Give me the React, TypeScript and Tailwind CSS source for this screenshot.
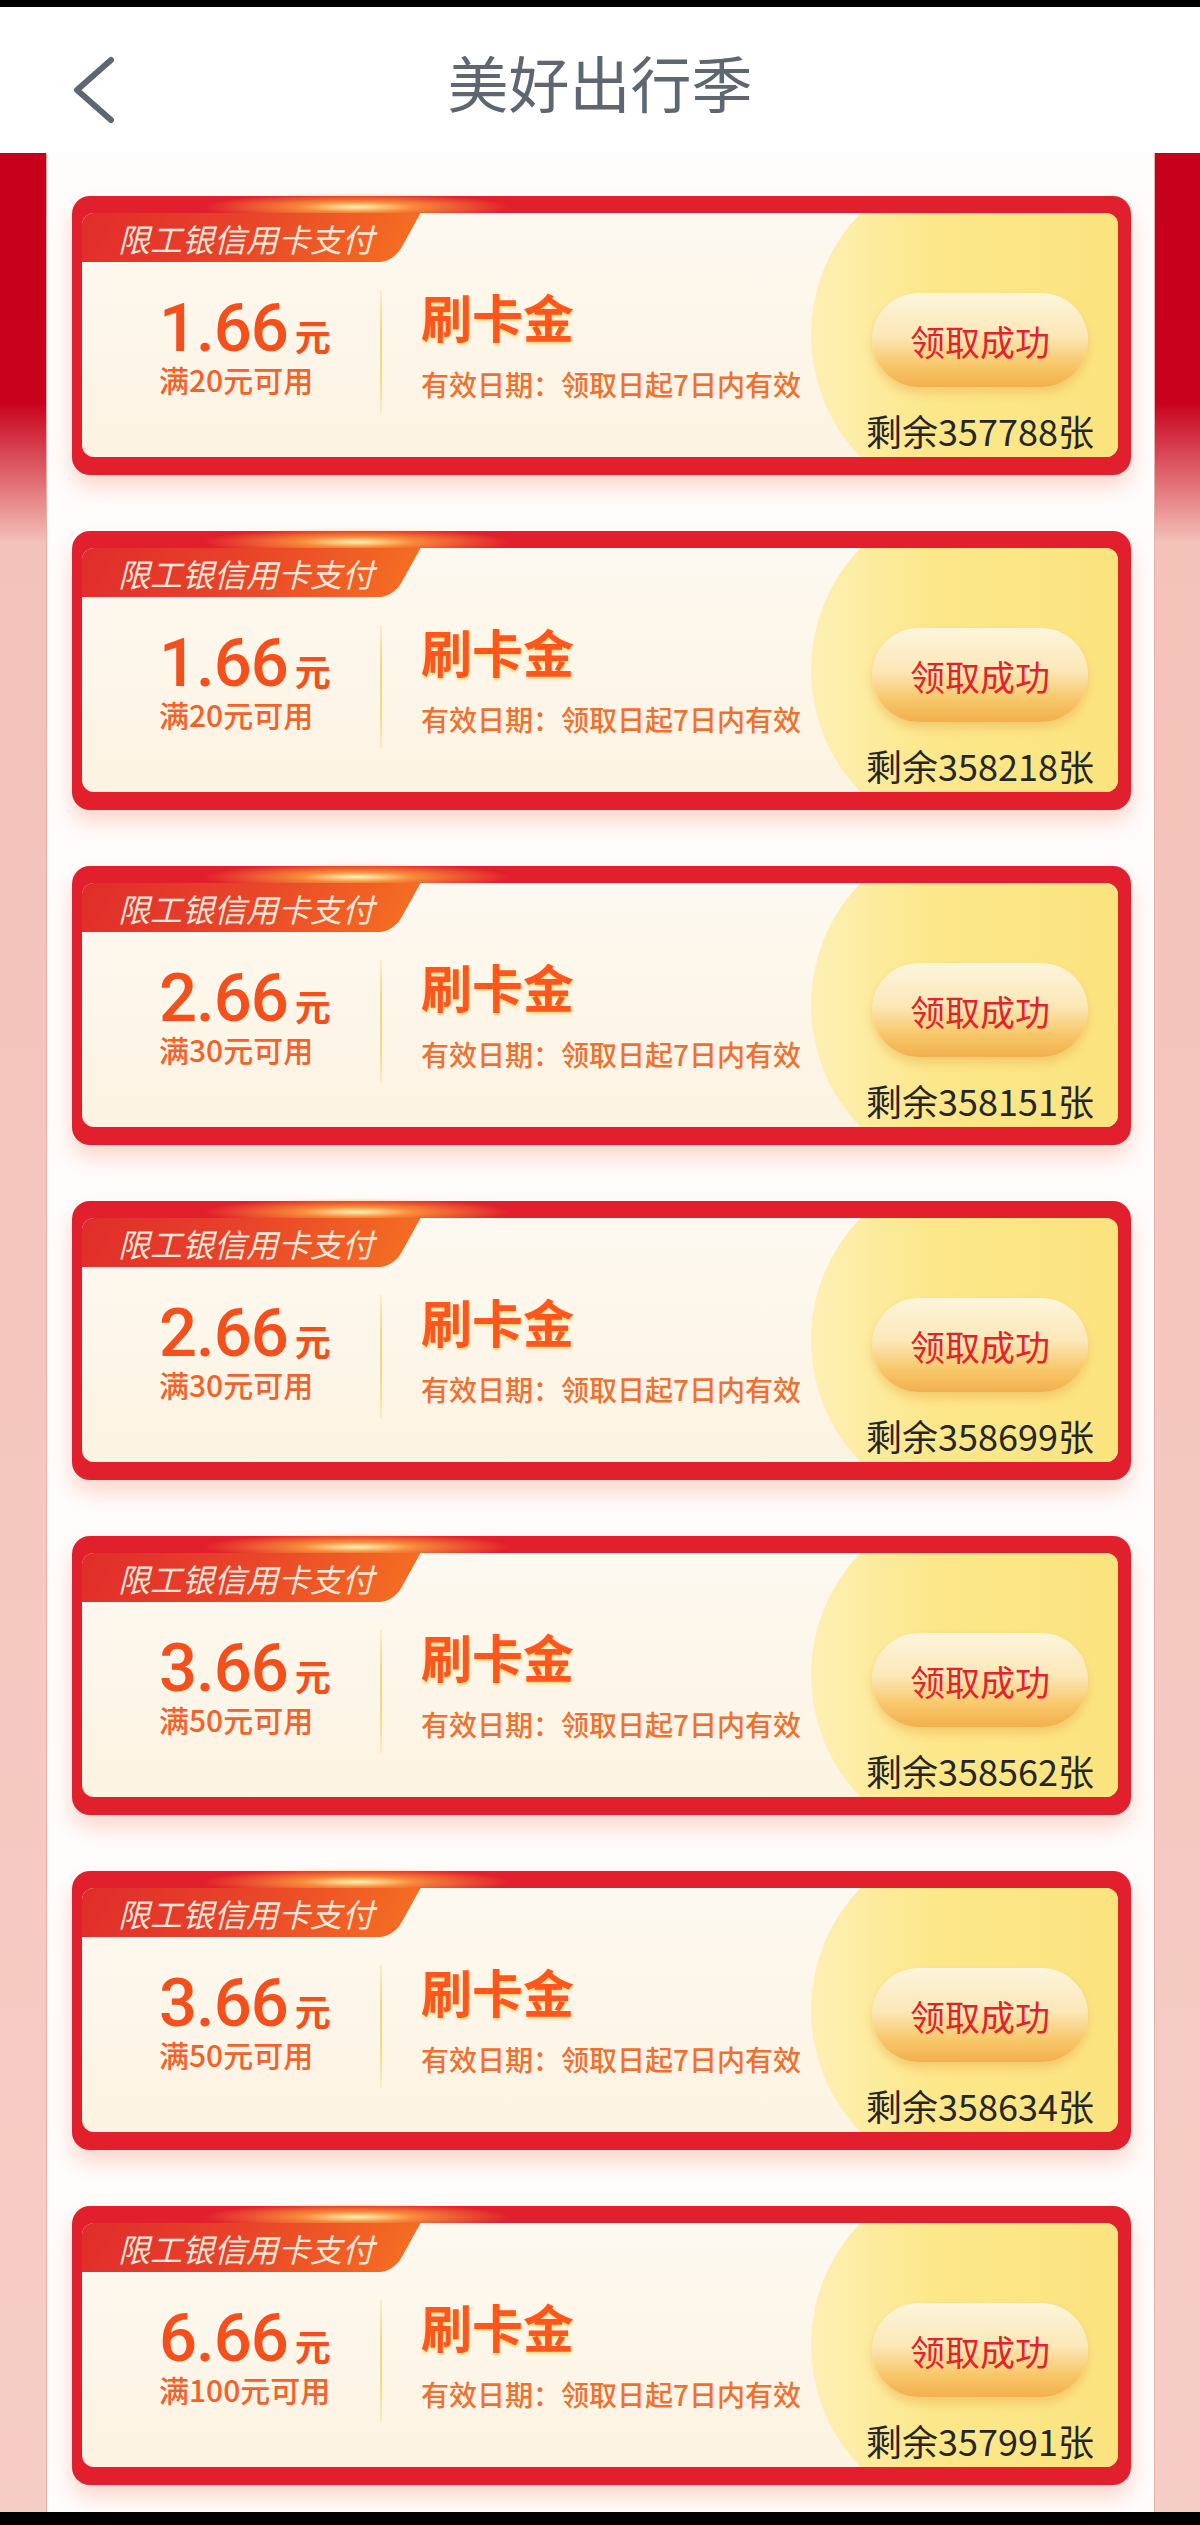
const cjk = "font-['Noto_Sans_CJK_SC','Noto_Sans',sans-serif]";

type Coupon = { amount: string; min: number; left: number };

const coupons: Coupon[] = [
  { amount: "1.66", min: 20, left: 357788 },
  { amount: "1.66", min: 20, left: 358218 },
  { amount: "2.66", min: 30, left: 358151 },
  { amount: "2.66", min: 30, left: 358699 },
  { amount: "3.66", min: 50, left: 358562 },
  { amount: "3.66", min: 50, left: 358634 },
  { amount: "6.66", min: 100, left: 357991 },
];

function CouponCard({ coupon }: { coupon: Coupon }) {
  return (
    <div className="relative h-[279px] shrink-0 rounded-[18px] bg-[#e21f2c] pt-[17px] pl-[10px] pr-[13px] pb-[18px] shadow-[0_12px_22px_rgba(236,112,80,0.28)]">
      {/* 上边的光 */}
      <div className="pointer-events-none absolute left-[130px] top-[-3px] h-[28px] w-[310px] rounded-full bg-[radial-gradient(ellipse_at_center,rgba(255,244,180,1)_0%,rgba(252,166,60,0.8)_26%,rgba(235,60,40,0)_70%)]" />

      <div className="relative h-full overflow-hidden rounded-[12px] bg-[linear-gradient(180deg,#fdf9f1,#fdf3e2)]">
        {/* 右侧黄色圆 */}
        <div className="absolute left-[729px] top-[-53px] h-[350px] w-[350px] rounded-full bg-[linear-gradient(90deg,#fdf0b4,#fce78a_35%,#fbe37c)]" />

        {/* 标签 */}
        <div className="absolute left-[-30px] top-0 h-[49px] w-[355px] -skew-x-[29deg] rounded-br-[14px] bg-[linear-gradient(90deg,#df2a2a,#e8422a_50%,#f46c22)]" />
        <div className={`absolute left-[36px] top-0 flex h-[49px] items-center text-[32px] italic leading-none text-[#fde6d8] ${cjk}`}>
          限工银信用卡支付
        </div>

        <div className="relative flex h-full">
          {/* 金额 */}
          <div className="w-[298px] shrink-0 pl-[77px] pt-[82px]">
            <div className="flex items-baseline text-[#f5501c]">
              <span className="font-['Roboto',sans-serif] text-[67px] font-medium leading-none tracking-[-1px]">
                {coupon.amount}
              </span>
              <span className={`ml-[7px] text-[36px] font-bold leading-none ${cjk}`}>元</span>
            </div>
            <div className={`mt-[2px] text-[30px] font-medium leading-none text-[#f4622a] ${cjk}`}>
              满{coupon.min}元可用
            </div>
          </div>

          <div className="mt-[77px] h-[123px] w-[2px] shrink-0 bg-[linear-gradient(180deg,rgba(246,214,130,0.3),#f6d68a_30%,#f6d68a_70%,rgba(246,214,130,0.3))]" />

          {/* 中间 */}
          <div className={`min-w-0 flex-1 pl-[39px] pt-[78px] ${cjk}`}>
            <div className="text-[51px] font-bold leading-none text-[#ff561d] [text-shadow:0_2px_3px_rgba(255,214,110,0.9)]">
              刷卡金
            </div>
            <div className="mt-[28px] whitespace-nowrap text-[28px] font-medium leading-none text-[#f0712f]">
              有效日期：领取日起7日内有效
            </div>
          </div>

          {/* 按钮 */}
          <div className={`mr-[13px] flex w-[250px] shrink-0 flex-col items-center pt-[80px] ${cjk}`}>
            <div className="flex h-[94px] w-[216px] items-center justify-center rounded-full bg-[linear-gradient(180deg,#fdf5dc_0%,#fce8b8_45%,#f8c86c_75%,#f2b04c_100%)] shadow-[0_6px_10px_rgba(232,160,70,0.4)]">
              <span className="text-[35px] leading-none text-[#e3222a]">领取成功</span>
            </div>
            <div className="mt-[25px] whitespace-nowrap text-[36px] leading-none text-[#262626]">
              剩余{coupon.left}张
            </div>
          </div>
        </div>
      </div>
    </div>
  );
}

export default function App() {
  return (
    <div className="flex h-[2525px] w-full flex-col overflow-hidden bg-black">
      <div className="h-[7px] shrink-0 bg-black" />

      {/* 顶栏 */}
      <header className="relative flex h-[146px] shrink-0 items-center justify-center bg-white pt-[2px]">
        <svg
          className="absolute left-[70px] top-[48px]"
          width="48"
          height="70"
          viewBox="0 0 48 70"
          fill="none"
        >
          <path d="M41 5 L7 35 L41 65" stroke="#5d6671" strokeWidth="6" strokeLinecap="round" strokeLinejoin="round" />
        </svg>
        <h1 className={`text-[61px] font-normal leading-none text-[#5d6671] ${cjk}`}>美好出行季</h1>
      </header>

      {/* 主体 */}
      <main className="flex-1 bg-[linear-gradient(180deg,#c7001b_0px,#c8021c_250px,#f3c2b9_390px,#f6cdc5_100%)] px-[45px] pl-[46px]">
        <div className="flex h-full flex-col gap-[56px] border-x border-[#e7b0a8] bg-[#fffdfc] pt-[43px] pl-[25px] pr-[23px]">
          {coupons.map((c, i) => (
            <CouponCard key={i} coupon={c} />
          ))}
        </div>
      </main>

      <div className="h-[13px] shrink-0 bg-black" />
    </div>
  );
}
